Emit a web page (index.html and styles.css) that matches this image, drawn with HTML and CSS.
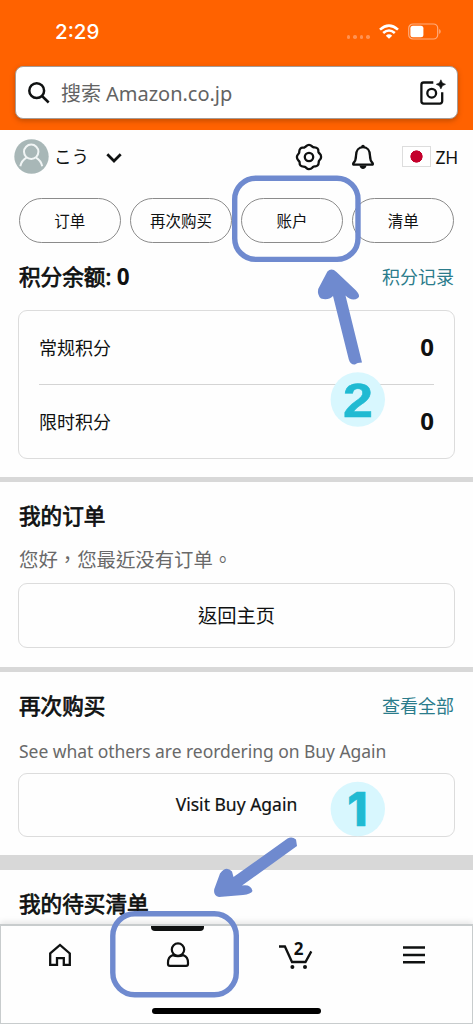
FILE: index.html
```html
<!DOCTYPE html>
<html lang="zh-CN">
<head>
<meta charset="utf-8">
<title>Amazon.co.jp</title>
<link rel="stylesheet" href="styles.css">
</head>
<body>
<div class="phone">
  <header class="header">
    <div class="status">
      <span class="time">2:29</span>
      <span class="dots"><i></i><i></i><i></i><i></i></span>
      <svg class="wifi" width="20" height="15" viewBox="0 0 20 15" fill="none" stroke="#fff" stroke-width="2.6"><path d="M1 5.6Q10-2.4 19 5.6M4.2 9Q10 4 15.8 9"/><path d="M10 14.8 6.8 11.7Q10 9 13.2 11.7Z" fill="#fff" stroke="none"/></svg>
      <svg class="battery" width="34" height="17" viewBox="0 0 34 17"><rect x=".7" y="1" width="29" height="15" rx="4.3" fill="none" stroke="#ffac7c" stroke-width="1.2"/><rect x="2.4" y="2.8" width="13" height="11.4" rx="2.5" fill="#fff"/><path d="M31.2 6v5c2-1 2-4 0-5" fill="#ffac7c"/></svg>
    </div>
    <div class="search">
      <svg width="22" height="22" viewBox="0 0 22 22" fill="none" stroke="#0f1111" stroke-width="2.5"><circle cx="8.7" cy="8.7" r="7.4"/><path d="m14 14 6.7 6.5"/></svg>
      <span class="placeholder">搜索 Amazon.co.jp</span>
      <svg width="26" height="27" viewBox="0 0 26 27" fill="none" stroke="#0f1111" stroke-width="2.3"><path d="M13.3 3.5H3.7a2.3 2.3 0 0 0-2.3 2.3v16.5a2.3 2.3 0 0 0 2.3 2.3h16.2a2.3 2.3 0 0 0 2.3-2.3V13.3"/><circle cx="11.7" cy="14.2" r="4.4"/><path d="m20.9.8 1.5 3.1 3.1 1.4-3.1 1.5-1.5 3.1-1.5-3.1-3.1-1.5 3.1-1.4z" fill="#0f1111" stroke-width=".6"/></svg>
    </div>
  </header>
  <main class="content">
    <div class="profile">
      <svg width="35" height="35" viewBox="0 0 35 35"><circle cx="17.5" cy="17.5" r="17.2" fill="#a8b7b7"/><g fill="none" stroke="#f1f5f5" stroke-width="2"><circle cx="17.2" cy="12.8" r="7.2"/><path d="M6.3 27.2c1-4.2 3.2-6.8 6.2-8.5M28.2 27.2c-1-4.2-3.2-6.8-6.2-8.5"/></g></svg>
      <span class="name">こう</span>
      <svg class="chevron" width="16" height="10" viewBox="0 0 16 10" fill="none" stroke="#0f1111" stroke-width="2.7"><path d="m1.3 1.2 6.7 6.8 6.7-6.8"/></svg>
      <svg class="gear" width="28" height="28" viewBox="-14 -14 28 28" fill="none" stroke="#0f1111" stroke-width="2.3" stroke-linejoin="round"><path d="M-4.1-9.900C-2.600-10.400-2.500-12.100 0-12.100S2.600-10.400 4.100-9.900 6.800-10.300 8.550-8.550 8.500-5.600 9.900-4.100 12.100-2.500 12.100 0 10.400 2.600 9.900 4.100 10.300 6.800 8.550 8.550 5.600 8.500 4.100 9.900 2.500 12.100 0 12.100-2.600 10.400-4.100 9.900-6.800 10.300-8.550 8.550-8.500 5.600-9.900 4.100-12.100 2.500-12.100 0-10.400-2.600-9.900-4.100-10.300-6.800-8.550-8.550-5.600-8.500-4.100-9.900Z"/><circle r="4.200"/></svg>
      <svg class="bell" width="24" height="26" viewBox="0 0 24 26" fill="none" stroke="#0f1111" stroke-width="2.3" stroke-linejoin="round"><path d="M2.200 20.600v-1.200C4.500 17.300 5 15.500 5 11.800 5 6.300 7.800 3.200 12 3.200s7 3.100 7 8.600c0 3.700.5 5.500 2.800 7.600v1.200Z"/><path d="M8.500 21.500h7c-.500 4.600-6.500 4.600-7 0M10.200 3c-.2-3 3.800-3 3.600 0" fill="#0f1111" stroke="none"/></svg>
      <span class="flag"></span>
      <span class="lang">ZH</span>
    </div>
    <nav class="pills"><a>订单</a><a>再次购买</a><a>账户</a><a>清单</a></nav>
    <section class="points">
      <div class="title-row"><h2>积分余额: <b>0</b></h2><a class="link">积分记录</a></div>
      <div class="card">
        <div class="point-row"><span>常规积分</span><b>0</b></div>
        <div class="point-row"><span>限时积分</span><b>0</b></div>
      </div>
    </section>
    <section class="orders">
      <div class="title-row"><h2>我的订单</h2></div>
      <p class="greeting" lang="zh-TW">您好，您最近没有订单。</p>
      <a class="button home-button" lang="zh-TW">返回主页</a>
    </section>
    <section class="again">
      <div class="title-row"><h2>再次购买</h2><a class="link">查看全部</a></div>
      <p class="latin"><span>See what others are reordering on Buy Again</span></p>
      <a class="button visit">Visit Buy Again</a>
    </section>
    <section class="wishlist"><div class="title-row"><h2>我的待买清单</h2></div></section>
  </main>
  <footer class="tabs">
    <div class="tab-row">
      <a class="tab"><svg width="26" height="26" viewBox="0 0 26 26" fill="none" stroke="#0f1111" stroke-width="2.3"><path d="M3.2 11.4 13 2.9l9.8 8.5v11.4h-6v-6.600H10v6.600H3.200Z"/></svg></a>
      <a class="tab active"><svg width="26" height="26" viewBox="0 0 26 26" fill="none" stroke="#0f1111" stroke-width="2.2"><circle cx="13" cy="7.600" r="6.200"/><path d="M7.500 13.200C4.400 14.400 3 17 3 20.500V22q0 1.900 1.900 1.900h16.200Q23 23.900 23 22v-1.500c0-3.500-1.400-6.100-4.500-7.300q-5.500 2-11 0Z"/></svg></a>
      <a class="tab cart"><svg width="36" height="30" viewBox="0 0 36 30"><path d="M1 6.500h5.900L14 22h13.500L33.300 11.400" fill="none" stroke="#0f1111" stroke-width="2.300"/><circle cx="14.400" cy="27" r="2" fill="#0f1111"/><circle cx="27" cy="27" r="2" fill="#0f1111"/><text class="cart-count" x="20.500" y="14.500" text-anchor="middle">2</text></svg></a>
      <a class="tab menu"><svg width="24" height="20" viewBox="0 0 24 20" stroke="#0f1111" stroke-width="2.500"><path d="M1 2.600h22M1 10h22M1 17.300h22"/></svg></a>
    </div>
    <div class="indicator"></div>
  </footer>
  <svg class="annotations" width="473" height="1024" viewBox="0 0 473 1024">
    <g fill="none" stroke="#6f8acf" stroke-width="5.400"><rect x="234.700" y="178.200" width="123.300" height="81.200" rx="21"/><rect x="112.800" y="913.800" width="123.500" height="81" rx="22"/></g>
    <g fill="#6f8acf">
      <path d="M327.400 271.500Q331.500 267.500 336.500 272L356 290.500Q361 296 358 298Q352 302 345.500 295.500L362 362.500Q357 362.500 355 364.500Q350.500 365 348.800 359.500L333 296Q328 301 321 298.500Q317 295 318.200 289Z"/>
      <path d="M287.500 838.500Q292 836 296 839.500L297 846L242 885.500Q251 884 252.500 891Q251 894 243 895L219 897Q213 896 214.300 889L220 873.500Q226 865 232 871.500L233.500 877Z"/>
    </g>
    <circle cx="357.800" cy="399.500" r="27.200" fill="#d8f7fe"/><circle cx="357.800" cy="809" r="27.200" fill="#d8f7fe"/>
    <text class="step" transform="translate(358 416.700) scale(1.100 1)" text-anchor="middle">2</text>
    <text class="step one" transform="translate(357.500 826.300)" text-anchor="middle">1</text>
  </svg>
</div>
</body>
</html>
```
FILE: styles.css
```css
* { box-sizing: border-box; }
body { margin: 0; }
.phone { position: relative; width: 473px; height: 1024px; overflow: hidden; display: flex; flex-direction: column; background: #fefefe; color: #0f1111; font-family: "Noto Sans", "Noto Sans CJK SC", sans-serif; }
svg { display: block; flex: none; overflow: visible; }
h2, p { margin: 0; }
.header { flex: none; height: 130px; padding: 0 15px; background: #ff6200; }
.status { height: 66px; padding: 0 18px 2px 40px; display: flex; align-items: center; color: #fff; }
.time { flex: 1; font: 500 20.5px/26px Inter, sans-serif; }
.dots { display: flex; gap: 3px; padding-top: 10px; margin-right: 9px; }
.dots i { width: 3.600px; height: 3.600px; border-radius: 50%; background: #ff9252; }
.wifi { margin: -2px 9px 0 0; }
.battery { margin: -1px -2px 0 0; }
.search { height: 53px; padding: 0 11px 0 12px; display: flex; align-items: center; background: #fff; border: 1px solid #a69c96; border-radius: 8px; box-shadow: 0 2px 5px rgba(90,40,0,.35); }
.placeholder { flex: 1; margin-left: 11px; padding-top: 2px; font-size: 20px; line-height: 28px; color: #636363; letter-spacing: -.03px; }
.content { flex: 1; min-height: 0; overflow: hidden; }
.profile { height: 53px; padding: 0 15px 0 14px; display: flex; align-items: center; }
.name { margin-left: 5px; padding-bottom: 2px; font: 17.500px/26px "Noto Sans CJK JP", sans-serif; }
.chevron { margin: 3px auto 0 17px; }
.gear { margin-right: 28px; }
.bell { margin-right: 27px; }
.flag { flex: none; width: 29px; height: 21px; border: 1px solid #ddd; background: radial-gradient(circle at center, #c4002b 5.800px, #fff 6.400px); }
.lang { margin-left: 5px; font-size: 17.500px; line-height: 24px; letter-spacing: -.3px; }
.pills { display: grid; grid-template-columns: repeat(4, 1fr); gap: 9.500px; padding: 15px 19px 0; }
.pills a { height: 45px; border: 1px solid #8b8b8b; border-radius: 23px; display: flex; align-items: center; justify-content: center; font-size: 15.500px; padding-bottom: 1px; }
section { padding: 0 19px; }
.title-row { display: flex; justify-content: space-between; align-items: center; height: 32px; }
h2 { font: 400 21.600px/32px "Noto Sans", "Noto Sans CJK SC", sans-serif; -webkit-text-stroke: .75px #0f1111; }
h2 b { font-size: 22.500px; font-weight: 700; -webkit-text-stroke: 0; }
.link { font-size: 18px; line-height: 26px; color: #2b7c8b; }
.points { height: 239px; padding-top: 18px; border-bottom: 5px solid #d8d8d8; }
.card { height: 149px; margin: 17px -1px 0; padding: 0 20px; border: 1.500px solid #dcdcdc; border-radius: 9px; }
.point-row { height: 74px; display: flex; align-items: center; justify-content: space-between; padding-bottom: 2px; font-size: 18px; }
.point-row:first-child { height: 73px; }
.point-row + .point-row { border-top: 1px solid #d4d4d4; }
.point-row b { font-size: 24px; }
.orders { height: 190px; padding-top: 18px; border-bottom: 5px solid #d8d8d8; }
.greeting { margin-top: 11px; font: 19.400px/32px "Noto Sans CJK TC", sans-serif; color: #696969; }
.button { display: flex; align-items: center; justify-content: center; margin: 8px -1px 0; height: 65px; padding-bottom: 2px; border: 1.500px solid #dcdcdc; border-radius: 9px; font-size: 19.300px; }
.home-button { font-family: "Noto Sans CJK TC", sans-serif; }
.again { height: 198px; padding-top: 18px; border-bottom: 15px solid #d8d8d8; }
.latin { margin-top: 15px; font-size: 17.500px; line-height: 28px; letter-spacing: -.05px; color: #696969; white-space: nowrap; }
.visit { height: 64px; font-size: 17.500px; -webkit-text-stroke: .2px #0f1111; }
.wishlist { padding-top: 18px; }
.tabs { flex: none; height: 100px; background: #fefefe; border: 2px solid #c8cccd; border-width: 2px 1.500px; border-bottom-width: 1px; box-shadow: 0 -2px 6px rgba(0,0,0,.1); z-index: 1; }
.tab-row { height: 82px; display: grid; grid-template-columns: repeat(4, 1fr); }
.tab { position: relative; display: flex; justify-content: center; align-items: center; padding-bottom: 25px; }
.cart, .menu { padding-left: 2px; }
.active::before { content: ""; position: absolute; top: 0; left: 32px; width: 53px; height: 5px; background: #0f1111; border-radius: 0 0 4px 4px; }
.indicator { width: 169px; height: 6px; margin: 0 auto; border-radius: 3px; background: #000; }
.cart-count { font: 700 17px "Noto Sans", sans-serif; fill: #0f1111; }
.annotations { position: absolute; inset: 0; z-index: 2; }
.step { font: 700 49px "Liberation Sans", sans-serif; fill: #20bad2; stroke: #20bad2; stroke-width: .6px; }
.one { font: 800 46px Inter, sans-serif; }
```
